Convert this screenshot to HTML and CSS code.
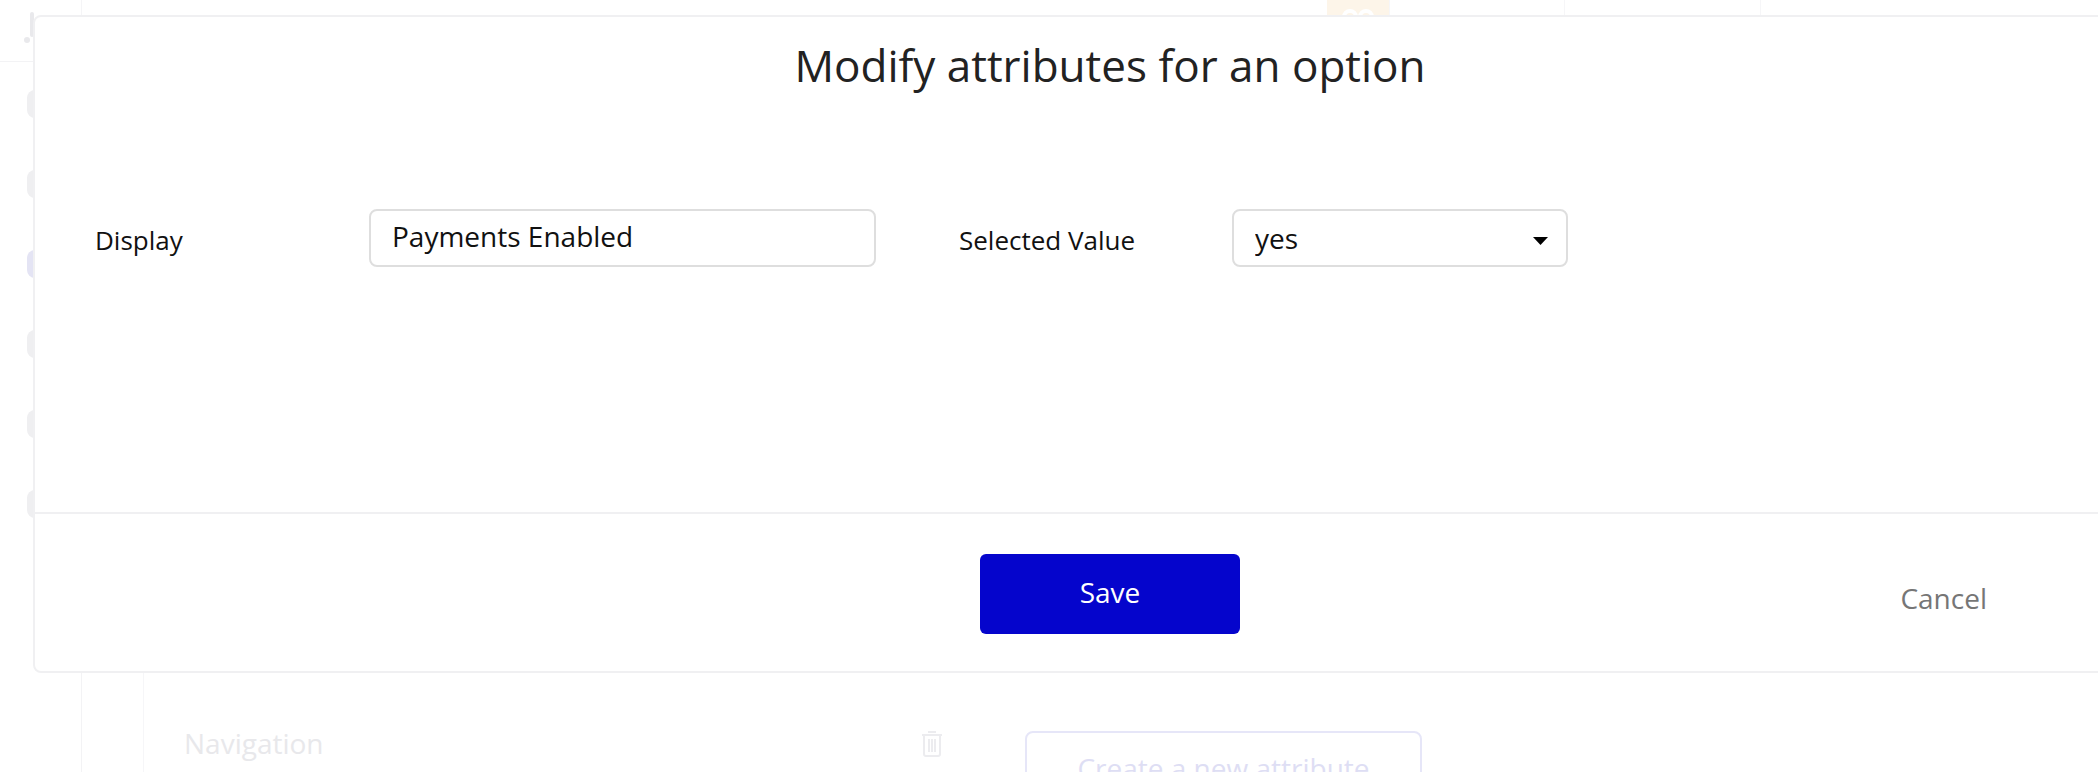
FILE: index.html
```html
<!DOCTYPE html>
<html lang="en">
<head>
<meta charset="utf-8">
<title>Modify attributes for an option</title>
<link rel="stylesheet" href="styles.css">
</head>
<body>
<div class="page">
  <header class="topbar">
    <div class="brand">
      <svg class="brand-mark" width="14" height="36" viewBox="0 0 14 36"><rect x="6" y="2" width="4" height="25" rx="2"/><circle cx="3" cy="30" r="3"/></svg>
    </div>
    <div class="topbar-space"></div>
    <div class="avatar">
      <svg width="40" height="20" viewBox="0 0 40 20"><path d="M6 18 V13 a6 6 0 0 1 12 0 V18 M22 18 V13 a6 6 0 0 1 12 0 V18" fill="none" stroke="#fff" stroke-width="4"/></svg>
    </div>
    <div class="topbar-cell cell-a"></div>
    <div class="topbar-cell cell-b"></div>
  </header>
  <div class="layout">
    <nav class="sidebar">
      <span class="side-icon"></span>
      <span class="side-icon"></span>
      <span class="side-icon side-icon-active"></span>
      <span class="side-icon"></span>
      <span class="side-icon"></span>
      <span class="side-icon"></span>
      <span class="side-icon side-icon-square"></span>
    </nav>
    <div class="subnav"></div>
    <main class="content">
      <div class="attr-list">
        <div class="attr-row">
          <span class="attr-name">Jobs</span>
          <svg class="trash" width="26" height="28" viewBox="0 0 26 28"><path d="M9 3 h8 M3 6 h20 M5 6 v19 a2 2 0 0 0 2 2 h12 a2 2 0 0 0 2 -2 v-19 M10 10 v13 M13 10 v13 M16 10 v13" fill="none" stroke="#ececef" stroke-width="2"/></svg>
        </div>
        <div class="attr-row">
          <span class="attr-name">Navigation</span>
          <svg class="trash" width="26" height="28" viewBox="0 0 26 28"><path d="M9 3 h8 M3 6 h20 M5 6 v19 a2 2 0 0 0 2 2 h12 a2 2 0 0 0 2 -2 v-19 M10 10 v13 M13 10 v13 M16 10 v13" fill="none" stroke="#ececef" stroke-width="2"/></svg>
        </div>
      </div>
      <div class="attr-side">
        <button class="btn-create" type="button">Create a new attribute</button>
      </div>
    </main>
  </div>
</div>

<div class="modal" role="dialog" aria-label="Modify attributes for an option">
  <div class="modal-body">
    <h1 class="modal-title">Modify attributes for an option</h1>
    <div class="field-row">
      <label class="field-label label-display" for="display">Display</label>
      <input class="text-input" id="display" type="text" value="Payments Enabled">
      <label class="field-label label-selected" for="selected">Selected Value</label>
      <div class="select-wrap">
        <select class="select" id="selected">
          <option>yes</option>
          <option>no</option>
        </select>
        <svg class="select-arrow" width="15" height="8" viewBox="0 0 15 8"><path d="M0 0 H15 L7.5 8 Z" fill="#000"/></svg>
      </div>
    </div>
  </div>
  <div class="modal-footer">
    <div></div>
    <button class="btn-save" type="button">Save</button>
    <span class="btn-cancel">Cancel</span>
  </div>
</div>
</body>
</html>
```

FILE: styles.css
```css
* { box-sizing: border-box; }

html, body {
  margin: 0;
  padding: 0;
}

body {
  width: 2098px;
  height: 772px;
  overflow: hidden;
  position: relative;
  background: #ffffff;
  font-family: "Open Sans", "Noto Sans", sans-serif;
  color: #111111;
}

/* ---------- faded page behind the dialog ---------- */
.page {
  display: flex;
  flex-direction: column;
  height: 772px;
}

.topbar {
  height: 62px;
  flex: none;
  display: flex;
  border-bottom: 1px solid #f3f3f5;
}

.brand {
  width: 82px;
  border-right: 1px solid #f5f5f7;
  padding: 10px 0 0 24px;
}

.brand-mark { fill: #e9e9ec; display: block; }

.topbar-space { width: 1245px; }

.avatar {
  width: 62px;
  background: #fdf5e9;
  display: flex;
  justify-content: center;
  padding-top: 4px;
}

.topbar-cell { border-left: 1px solid #f6f6f8; }
.cell-a { width: 175px; }
.cell-b { width: 197px; border-right: 1px solid #f6f6f8; }

.layout {
  flex: 1;
  display: flex;
}

.sidebar {
  width: 82px;
  flex: none;
  border-right: 1px solid #f3f3f5;
  display: flex;
  flex-direction: column;
  align-items: center;
  padding-top: 28px;
  gap: 52px;
}

.side-icon {
  width: 28px;
  height: 28px;
  border-radius: 8px;
  background: #efeff1;
}

.side-icon-active { background: #e4e4f4; }
.side-icon-square { width: 14px; height: 34px; border-radius: 2px; margin-left: 14px; }

.subnav {
  width: 62px;
  flex: none;
  border-right: 1px solid #f6f6f8;
}

.content {
  flex: 1;
  display: flex;
}

.attr-list {
  width: 881px;
  padding: 546px 80px 0 40px;
}

.attr-row {
  height: 90px;
  display: flex;
  align-items: center;
  justify-content: space-between;
}

.attr-name {
  font-size: 28px;
  color: #e8e8eb;
}

.trash { display: block; }

.attr-side { padding-top: 669px; }

.btn-create {
  width: 397px;
  height: 70px;
  border: 2px solid #e6e6f8;
  border-radius: 8px;
  background: #ffffff;
  font-family: "Open Sans", "Noto Sans", sans-serif;
  font-size: 28px;
  color: #dedef4;
  padding: 16px 0 0;
  display: flex;
  justify-content: center;
  align-items: flex-start;
}

/* ---------- dialog ---------- */
.modal {
  position: absolute;
  top: 15px;
  left: 33px;
  width: 2154px;
  height: 658px;
  background: #ffffff;
  border: 2px solid #f0f0f2;
  border-radius: 8px;
  display: flex;
  flex-direction: column;
}

.modal-body {
  height: 495px;
  flex: none;
  padding-top: 18px;
}

.modal-title {
  margin: 0;
  font-size: 44px;
  font-weight: 400;
  line-height: 60px;
  text-align: center;
  color: #222222;
}

.field-row {
  margin-top: 114px;
  padding-left: 60px;
  height: 58px;
  display: flex;
  align-items: center;
}

.field-label {
  font-size: 26px;
  color: #111111;
  padding-top: 4px;
}

.label-display { width: 274px; }

.label-selected {
  width: 273px;
  margin-left: 83px;
}

.text-input {
  width: 507px;
  height: 58px;
  border: 2px solid #dedede;
  border-radius: 8px;
  padding: 0 0 4px 21px;
  font-family: "Open Sans", "Noto Sans", sans-serif;
  font-size: 28px;
  color: #111111;
  background: #ffffff;
  outline: none;
}

.select-wrap {
  position: relative;
  width: 336px;
  height: 58px;
}

.select {
  appearance: none;
  -webkit-appearance: none;
  width: 100%;
  height: 100%;
  border: 2px solid #dedede;
  border-radius: 8px;
  padding: 0 0 0 21px;
  font-family: "Open Sans", "Noto Sans", sans-serif;
  font-size: 28px;
  color: #111111;
  background: #ffffff;
  outline: none;
}

.select-arrow {
  position: absolute;
  right: 20px;
  top: 28px;
  pointer-events: none;
}

.modal-footer {
  flex: 1;
  border-top: 2px solid #f0f0f2;
  display: grid;
  grid-template-columns: 1fr 260px 1fr;
  align-items: center;
  padding-top: 2px;
}

.btn-save {
  width: 260px;
  height: 80px;
  border: none;
  border-radius: 6px;
  background: #0505cc;
  color: #ffffff;
  font-family: "Open Sans", "Noto Sans", sans-serif;
  font-size: 28px;
  padding: 0 0 4px;
}

.btn-cancel {
  justify-self: end;
  margin: 8px 198px 0 0;
  font-size: 28px;
  color: #767676;
}
```
